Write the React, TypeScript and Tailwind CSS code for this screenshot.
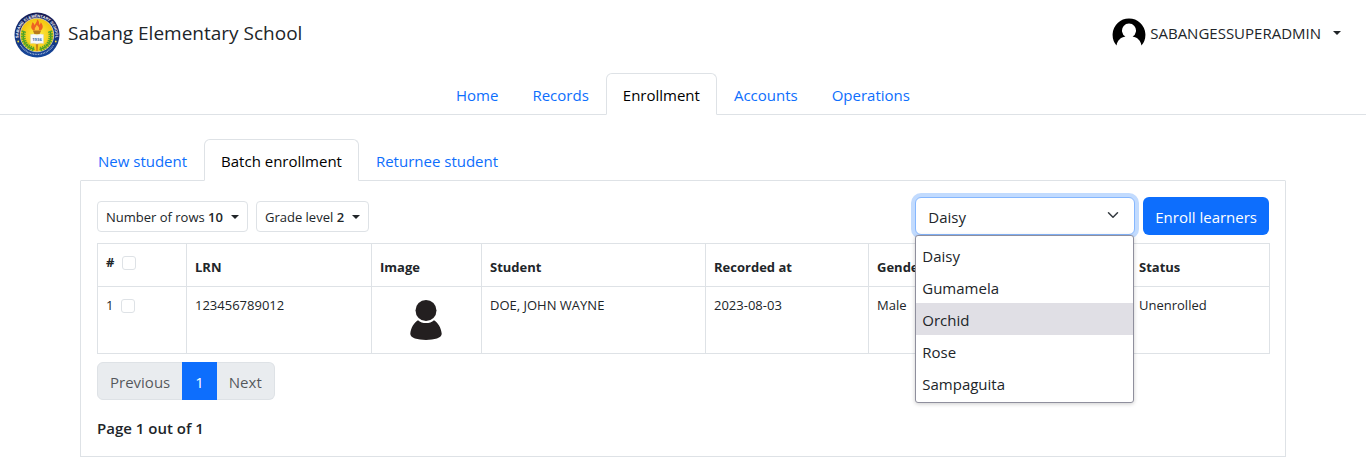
import { useState } from "react";

const mainTabs = ["Home", "Records", "Enrollment", "Accounts", "Operations"];
const enrollmentTabs = ["New student", "Batch enrollment", "Returnee student"];
const sections = ["Daisy", "Gumamela", "Orchid", "Rose", "Sampaguita"];

function Tabs({ items, active, label, className }: { items: string[]; active: string; label: string; className: string }) {
  return (
    <nav aria-label={label} className={`flex border-b border-[#dee2e6] ${className}`}>
      {items.map((item) => (
        <a
          key={item}
          href="#"
          aria-current={item === active ? "page" : undefined}
          className={
            item === active
              ? "-mb-px rounded-t-md border border-[#dee2e6] border-b-white bg-white px-4 pt-[9px] pb-[7px] text-black"
              : "-mb-px border border-transparent border-b-[#dee2e6] px-4 pt-[9px] pb-[7px] text-[#0d6efd]"
          }
        >
          {item}
        </a>
      ))}
    </nav>
  );
}

function Caret() {
  return (
    <svg viewBox="0 0 8 4" className="h-1 w-2 shrink-0" fill="currentColor" aria-hidden="true">
      <path d="M0 0H8L4 4Z" />
    </svg>
  );
}

function SchoolSeal() {
  return (
    <svg viewBox="0 0 46 46" className="size-[46px]" role="img" aria-label="School seal">
      <defs>
        <path id="sealTop" d="M5.600 30A18.500 18.500 0 1 1 40.400 30" />
        <radialGradient id="sealGold">
          <stop offset="0" stopColor="#fff04a" />
          <stop offset="1" stopColor="#f3c40c" />
        </radialGradient>
        <linearGradient id="sealBlue" x1="0" y1="0" x2="0" y2="1">
          <stop offset="0" stopColor="#171d55" />
          <stop offset="1" stopColor="#15479c" />
        </linearGradient>
      </defs>
      <circle cx="23" cy="23" r="22.500" fill="url(#sealBlue)" />
      <circle cx="23" cy="23" r="16.800" fill="url(#sealGold)" stroke="#e9edf5" strokeWidth="0.600" />
      <text fontSize="3.900" fontWeight="700" fill="#fff" textAnchor="middle" fontFamily="Liberation Sans, sans-serif">
        <textPath href="#sealTop" startOffset="50%">SABANG ELEMENTARY SCHOOL</textPath>
      </text>
      <path d="M6.500 33A19.200 19.200 0 0 0 39.500 33" fill="none" stroke="#a9bbdb" strokeWidth="1.300" strokeDasharray="0.900 0.700" />
      <circle cx="4.200" cy="29.500" r="0.900" fill="#f8df36" />
      <circle cx="41.800" cy="29.500" r="0.900" fill="#f8df36" />
      <g fill="none">
        <path d="M10 19C7.500 27 11 35 20.500 37.300M36 19C38.500 27 35 35 25.500 37.300" stroke="#3c8f22" strokeWidth="1.200" />
        <path d="M10 19C7.500 27 11 35 20.500 37.300M36 19C38.500 27 35 35 25.500 37.300" stroke="#55a82b" strokeWidth="4.400" strokeDasharray="1.500 0.900" />
      </g>
      <path d="M21.700 30H24.300L23.700 39H22.300Z" fill="#c98516" />
      <path d="M16.500 22.500Q20 21.500 23 23Q26 21.500 29.500 22.500V31.500Q26 30.800 23 32Q20 30.800 16.500 31.500Z" fill="#f6f8fb" stroke="#d5d5ba" strokeWidth="0.400" />
      <text x="23" y="28.800" fontSize="4.200" fontWeight="700" fill="#3268a4" textAnchor="middle">1936</text>
      <path d="M18.800 18.500H27.200L25.600 22H20.400Z" fill="#b87a1d" />
      <path d="M19 18.300C15.500 15 18.400 12.700 18.200 10.300C20.300 11.300 20.600 12.700 20.600 13.500C21.200 11 23.300 10.200 23 7.500C25.600 8.900 24.900 11.500 25.500 13C25.900 12 26.800 11.600 26.700 10.300C29.400 13 29.400 16.500 27 18.300Z" fill="#ee6322" />
      <path d="M21 18C19.800 16 22.700 14.500 22.600 12.700C25 14.500 25.600 16.600 24.800 18Z" fill="#fdc236" />
    </svg>
  );
}

function Avatar() {
  return (
    <svg viewBox="0 0 34 32" className="h-8 w-[34px]" aria-hidden="true">
      <path
        fillRule="evenodd"
        fill="#000"
        d="M4.500 28.500A16.400 16.400 0 1 1 29.500 28.500C28.500 23.500 25.400 20.400 20.600 19.600A7 7 0 1 0 13.400 19.600C8.600 20.400 5.500 23.500 4.500 28.500Z"
      />
    </svg>
  );
}

function StudentSilhouette() {
  return (
    <svg viewBox="1 0 50 50" className="mx-auto size-[50px]" role="img" aria-label="Student photo placeholder" fill="#231f20">
      <circle cx="25" cy="15.500" r="10.500" />
      <path d="M17 25.200C21 29 29 29 33 25.200C37 27.600 40 32.500 40.700 38.500C41.100 43 33 44.900 25 44.900C17 44.900 8.900 43 9.300 38.500C10 32.500 13 27.600 17 25.200Z" />
    </svg>
  );
}

const check = "size-[14px] shrink-0 appearance-none rounded-[3px] border border-[#dee2e6] bg-white checked:bg-[#0d6efd]";
const filterButton = "flex items-center gap-2 rounded border border-[#dee2e6] px-2 pt-[5px] pb-[3px] text-[13px] leading-[21px]";

export default function App() {
  const [section, setSection] = useState("Daisy");
  return (
    <div className="bg-white font-['Open_Sans','Noto_Sans',sans-serif] text-[15px] leading-6 text-[#212529]">
      <header className="flex items-center justify-between pt-3 pr-[25px] pb-[15px] pl-[14px]">
        <a href="#" className="flex items-center gap-2 text-[19px]">
          <SchoolSeal />
          <span className="pb-1">Sabang Elementary School</span>
        </a>
        <button type="button" className="flex items-center gap-1 pb-1">
          <Avatar />
          <span>SABANGESSUPERADMIN</span>
          <span className="pl-2"><Caret /></span>
        </button>
      </header>

      <Tabs items={mainTabs} active="Enrollment" label="Main" className="justify-center" />

      <main className="px-20 pt-6 pb-4">
        <Tabs items={enrollmentTabs} active="Batch enrollment" label="Enrollment" className="border-x border-x-transparent" />
        <section className="border border-t-0 border-[#dee2e6] p-4">
          <div className="mb-2 flex items-center justify-between">
            <div className="flex gap-2">
              <button type="button" className={filterButton}>
                <span>Number of rows <b className="font-semibold">10</b></span>
                <Caret />
              </button>
              <button type="button" className={filterButton}>
                <span>Grade level <b className="font-semibold">2</b></span>
                <Caret />
              </button>
            </div>
            <div className="flex gap-2">
              <div className="relative w-[220px]">
                <select
                  aria-label="Section"
                  value={section}
                  onChange={(e) => setSection(e.target.value)}
                  className="h-[38px] w-full appearance-none rounded-md border border-[#86b7fe] bg-white px-3 pt-0.5 shadow-[0_0_0_4px_#c2dbfe] outline-none"
                >
                  {sections.map((name) => <option key={name}>{name}</option>)}
                </select>
                <svg viewBox="0 0 16 16" className="pointer-events-none absolute top-3 right-[14px] h-3 w-4" fill="none" stroke="#343a40" strokeWidth="2" strokeLinecap="round" strokeLinejoin="round" aria-hidden="true">
                  <path d="m2 5 6 6 6-6" />
                </svg>
                <ul role="listbox" aria-label="Section options" className="absolute top-full right-px left-0 z-10 rounded-[3px] border border-[#8f8f9d] bg-white py-[3px] shadow-[0_1px_4px_rgba(0,0,0,0.2)]">
                  {sections.map((name) => (
                    <li
                      key={name}
                      role="option"
                      aria-selected={name === section}
                      onClick={() => setSection(name)}
                      className={name === "Orchid" ? "bg-[#e0dfe5] px-1.5 pt-[5px] pb-[3px]" : "px-1.5 pt-[5px] pb-[3px]"}
                    >
                      {name}
                    </li>
                  ))}
                </ul>
              </div>
              <button type="button" className="h-[38px] rounded-md bg-[#0d6efd] px-3 pt-0.5 text-white">Enroll learners</button>
            </div>
          </div>

          <table className="w-full table-fixed border-collapse text-left text-[13px] leading-[21px] [&_td]:border [&_td]:border-[#dee2e6] [&_td]:p-2 [&_td]:align-top [&_th]:border [&_th]:border-[#dee2e6] [&_th]:p-2 [&_th]:align-bottom [&_th]:font-bold">
            <colgroup>
              <col className="w-[89px]" />
              <col className="w-[185px]" />
              <col className="w-[110px]" />
              <col className="w-[224px]" />
              <col className="w-[163px]" />
              <col className="w-[262px]" />
              <col className="w-[139px]" />
            </colgroup>
            <thead>
              <tr>
                <th>
                  <label className="mb-[5px] flex items-center gap-2"># <input type="checkbox" aria-label="Select all students" className={check} /></label>
                </th>
                <th>LRN</th>
                <th>Image</th>
                <th>Student</th>
                <th>Recorded at</th>
                <th>Gender</th>
                <th>Status</th>
              </tr>
            </thead>
            <tbody>
              <tr>
                <td>
                  <label className="flex items-center gap-2">1 <input type="checkbox" aria-label="Select DOE, JOHN WAYNE" className={check} /></label>
                </td>
                <td>123456789012</td>
                <td><StudentSilhouette /></td>
                <td>DOE, JOHN WAYNE</td>
                <td>2023-08-03</td>
                <td>Male</td>
                <td>Unenrolled</td>
              </tr>
            </tbody>
          </table>

          <nav aria-label="Pagination" className="mt-2 mb-4 flex">
            <button type="button" disabled className="rounded-l-md border border-[#dee2e6] bg-[#e9ecef] px-3 pt-[7px] pb-[5px] text-[#212529]/75">Previous</button>
            <button type="button" aria-current="page" className="-ml-px border border-[#0d6efd] bg-[#0d6efd] px-3 pt-[7px] pb-[5px] text-white">1</button>
            <button type="button" disabled className="rounded-r-md border border-l-0 border-[#dee2e6] bg-[#e9ecef] px-3 pt-[7px] pb-[5px] text-[#212529]/75">Next</button>
          </nav>
          <p className="font-semibold">Page 1 out of 1</p>
        </section>
      </main>
    </div>
  );
}
